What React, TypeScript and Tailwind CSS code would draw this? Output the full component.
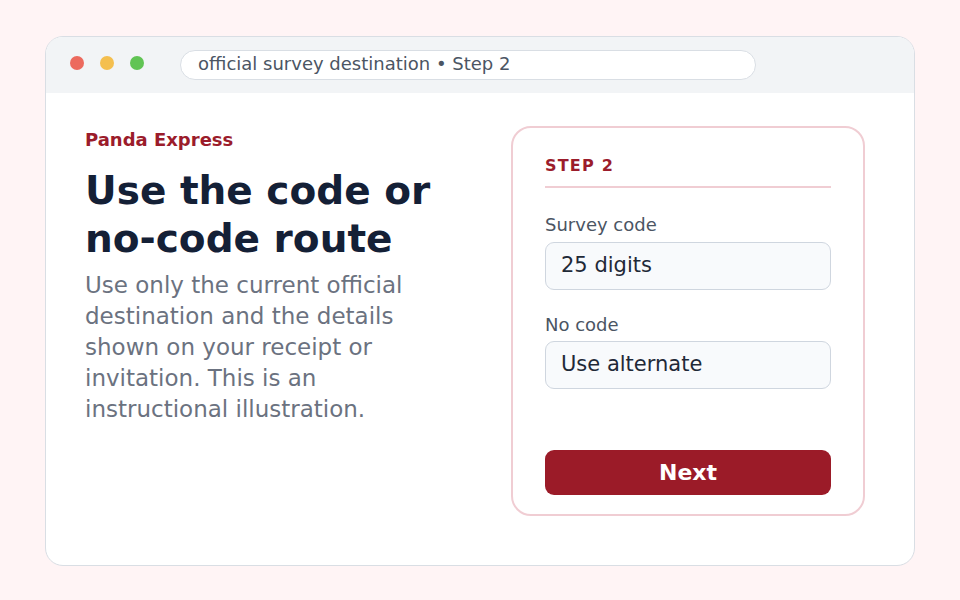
export default function App() {
  return (
    <div className="min-h-screen w-full bg-[#fff4f5] flex items-start justify-center pt-[36px] font-['DejaVu_Sans',sans-serif]">
      <div className="w-[870px] h-[530px] rounded-[18px] border border-[#d9dee4] bg-white overflow-hidden flex flex-col">
        {/* title bar */}
        <div className="h-[56px] shrink-0 bg-[#f2f4f6] flex items-center pl-[24px]">
          <div className="flex items-center gap-[16px] mb-[4px]">
            <span className="w-[14px] h-[14px] rounded-full bg-[#ec6a5e]" />
            <span className="w-[14px] h-[14px] rounded-full bg-[#f4bf4f]" />
            <span className="w-[14px] h-[14px] rounded-full bg-[#61c454]" />
          </div>
          <div className="ml-[36px] mb-[1px] w-[576px] h-[30px] rounded-full bg-white border border-[#d9dee4] flex items-center pl-[17px] pb-[2px] text-[18px] text-[#4b5563]">
            official survey destination • Step 2
          </div>
        </div>

        {/* body */}
        <div className="flex-1 grid grid-cols-[1fr_354px] gap-[64px] pl-[39px] pr-[49px] pt-[33px] pb-[49px]">
          <div className="flex flex-col pt-[2px]">
            <div className="text-[18px] leading-[24px] font-bold text-[#9b1c2b]">Panda Express</div>
            <h1 className="mt-[15px] text-[39px] leading-[48px] font-bold text-[#142036]">
              Use the code or no-code route
            </h1>
            <p className="mt-[7px] text-[23px] leading-[31px] text-[#6b7280]">
              Use only the current official destination and the details shown on your receipt or invitation. This is an instructional illustration.
            </p>
          </div>

          <div className="rounded-[20px] border-2 border-[#f0cdd3] px-[32px] pt-[26px] pb-[19px] flex flex-col">
            <div className="pb-[8px] border-b-2 border-[#f0cdd3] text-[16px] leading-[24px] font-bold tracking-[1.2px] text-[#9b1c2b]">
              STEP 2
            </div>
            <label className="mt-[25px] text-[18px] leading-[24px] text-[#4b5563]">Survey code</label>
            <div className="mt-[5px] h-[48px] rounded-[9px] border border-[#cfd6df] bg-[#f8fafc] flex items-center px-[15px] text-[21px] text-[#1f2937]">
              25 digits
            </div>
            <label className="mt-[23px] text-[18px] leading-[24px] text-[#4b5563]">No code</label>
            <div className="mt-[4px] h-[48px] rounded-[9px] border border-[#cfd6df] bg-[#f8fafc] flex items-center px-[15px] text-[21px] text-[#1f2937]">
              Use alternate
            </div>
            <button className="mt-auto h-[45px] rounded-[9px] bg-[#9b1b28] text-white text-[22px] font-bold">
              Next
            </button>
          </div>
        </div>
      </div>
    </div>
  );
}
